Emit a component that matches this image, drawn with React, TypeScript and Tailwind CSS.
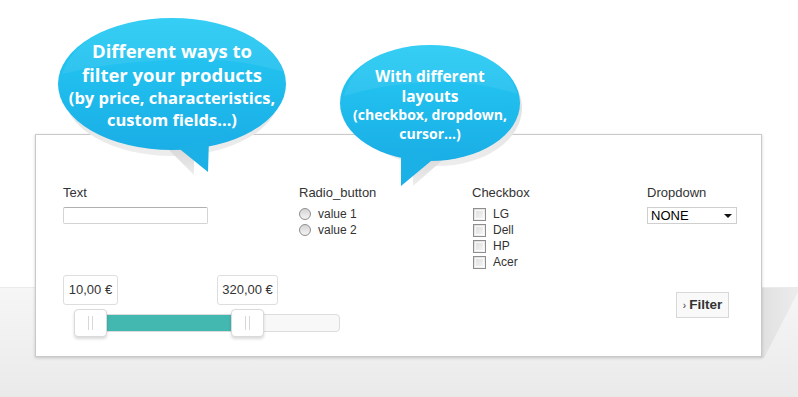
import React from "react";

const priceMin = 10;
const priceMax = 320;

function Bubbles() {
  return (
    <svg className="absolute left-0 top-0" width="798" height="200" viewBox="0 0 798 200">
      <defs>
        <linearGradient id="blue" x1="0" y1="0" x2="0" y2="1">
          <stop offset="0" stopColor="#26cbf4" />
          <stop offset="1" stopColor="#1aaee6" />
        </linearGradient>
        <linearGradient id="shade" x1="0" y1="0" x2="0" y2="1">
          <stop offset="0" stopColor="#d6d6d6" />
          <stop offset="1" stopColor="#ededed" />
        </linearGradient>
      </defs>
      {/* bubble 1 shadow */}
      <g fill="url(#shade)">
        <ellipse cx="172" cy="94" rx="108" ry="62" />
        <polygon points="165,146 194,146 194,175" />
      </g>
      <ellipse cx="172" cy="84" rx="114" ry="66" fill="url(#blue)" />
      <polygon points="176,146 209,138 208,172" fill="#1bb0e6" />
      <path d="M62 74 Q80 22 172 18 Q262 20 284 72 Q230 56 172 60 Q110 62 62 74Z" fill="#ffffff" opacity="0.07" />

      {/* bubble 2 shadow */}
      <g fill="url(#shade)">
        <ellipse cx="438" cy="108" rx="84" ry="58" />
        <polygon points="413,150 445,158 413,186" />
      </g>
      <ellipse cx="430" cy="103" rx="90" ry="58" fill="url(#blue)" />
      <polygon points="401,148 437,156 401,186" fill="#1bb0e6" />
      <path d="M344 96 Q356 48 430 45 Q504 48 517 94 Q474 80 430 82 Q384 84 344 96Z" fill="#ffffff" opacity="0.07" />
    </svg>
  );
}

function Radio({ label }: { label: string }) {
  return (
    <div className="flex items-center h-4">
      <span className="w-3 h-3 rounded-full border border-[#8e8e8e] bg-gradient-to-b from-[#d4d4d4] to-[#f4f4f4]" />
      <span className="ml-[7px]">{label}</span>
    </div>
  );
}

function Check({ label }: { label: string }) {
  return (
    <div className="flex items-center h-4">
      <span className="w-[13px] h-[13px] border border-[#8e8e8e] bg-gradient-to-br from-[#dcdcdc] to-[#f8f8f8] p-[1px]">
        <span className="block w-full h-full border border-white/70" />
      </span>
      <span className="ml-[7px]">{label}</span>
    </div>
  );
}

function PriceSlider() {
  const left = 0;
  const right = 157;
  return (
    <div className="relative w-[280px] h-[64px]">
      <div className="absolute left-0 top-0 h-[30px] w-[55px] border border-[#dedede] rounded-[3px] flex items-center justify-center text-[13px] text-[#333]">
        {priceMin.toFixed(2).replace(".", ",")} €
      </div>
      <div
        className="absolute top-0 h-[30px] w-[61px] border border-[#dedede] rounded-[3px] flex items-center justify-center text-[13px] text-[#333]"
        style={{ left: 154 }}
      >
        {priceMax.toFixed(2).replace(".", ",")} €
      </div>
      <div className="absolute left-[12px] top-[39px] w-[265px] h-[18px] rounded-[4px] border border-[#dcdcdc] bg-[#f8f8f8]" />
      <div className="absolute top-[40px] h-[16px] bg-[#42b8b0]" style={{ left: 12 + left + 20, width: right - left }} />
      {[left, right].map((x) => (
        <div
          key={x}
          className="absolute top-[34px] w-[33px] h-[28px] rounded-[4px] border border-[#dadada] bg-white shadow-[0_2px_3px_rgba(0,0,0,0.15)] flex items-center justify-center gap-[3px]"
          style={{ left: 11 + x }}
        >
          <span className="w-px h-[14px] bg-[#d8d8d8]" />
          <span className="w-px h-[14px] bg-[#d8d8d8]" />
        </div>
      ))}
    </div>
  );
}

export default function App() {
  return (
    <div className="relative w-[798px] h-[397px] overflow-hidden bg-white font-['Liberation_Sans',Arial,sans-serif] text-[#333]">
      {/* floor band */}
      <div className="absolute left-0 right-0 top-[287px] bottom-0 border-t border-[#ebebeb] bg-gradient-to-b from-[#f6f6f6] to-[#eaeaea]" />
      <svg className="absolute left-[760px] top-[288px]" width="38" height="72" viewBox="0 0 38 72">
        <defs>
          <linearGradient id="leg" x1="0" y1="0" x2="1" y2="0">
            <stop offset="0" stopColor="#e0e0e0" />
            <stop offset="1" stopColor="#ececec" />
          </linearGradient>
        </defs>
        <polygon points="0,0 38,0 38,4 4,70 0,70" fill="url(#leg)" />
      </svg>

      <div className="relative ml-[35px] mt-[134px] w-[727px] h-[223px] bg-white border border-[#c9c9c9] shadow-[0_1px_3px_rgba(0,0,0,0.18)] pl-[27px] pt-[50px]">
        <div className="flex text-[12px]">
          <div className="w-[236px]">
            <div className="text-[13px] leading-[15px]">Text</div>
            <div className="mt-[7px] w-[145px] h-[17px] rounded-[2px] border border-[#d4d4d4] border-t-[#b0b0b0]" />
          </div>
          <div className="w-[173px]">
            <div className="text-[13px] leading-[15px]">Radio_button</div>
            <div className="mt-[6px]">
              <Radio label="value 1" />
              <Radio label="value 2" />
            </div>
          </div>
          <div className="w-[175px]">
            <div className="text-[13px] leading-[15px]">Checkbox</div>
            <div className="mt-[6px] pl-px">
              <Check label="LG" />
              <Check label="Dell" />
              <Check label="HP" />
              <Check label="Acer" />
            </div>
          </div>
          <div>
            <div className="text-[13px] leading-[15px]">Dropdown</div>
            <div className="mt-[7px] w-[90px] h-[17px] border border-[#cfcfcf] flex items-center justify-between pl-[3px] pr-[4px] text-[13px] text-black">
              <span>NONE</span>
              <svg width="8" height="4" viewBox="0 0 8 4">
                <polygon points="0,0 8,0 4,4" fill="#111" />
              </svg>
            </div>
          </div>
        </div>

        <div className="flex justify-between items-start mt-[5px] pr-[32px]">
          <PriceSlider />
          <button className="mt-[17px] w-[53px] h-[26px] border border-[#d8d8d8] bg-[#f9f9f9] text-[13.5px] font-bold text-[#333] flex items-center justify-center gap-[3px]">
            <span className="text-[10px] font-normal">›</span>
            <span>Filter</span>
          </button>
        </div>
      </div>

      <Bubbles />

      <div className="absolute left-[52px] top-[39px] w-[240px] text-center text-white font-bold font-['Open_Sans',sans-serif]">
        <div className="text-[18.5px] leading-[24px]">Different ways to</div>
        <div className="text-[18.5px] leading-[24px]">filter your products</div>
        <div className="text-[16.5px] leading-[22px]">(by price, characteristics,</div>
        <div className="text-[16.5px] leading-[22px]">custom fields...)</div>
      </div>
      <div className="absolute left-[330px] top-[66px] w-[200px] text-center text-white font-bold font-['Open_Sans',sans-serif]">
        <div className="text-[15.5px] leading-[20px]">With different</div>
        <div className="text-[15.5px] leading-[20px]">layouts</div>
        <div className="text-[14px] leading-[18px]">(checkbox, dropdown,</div>
        <div className="text-[14px] leading-[19px]">cursor...)</div>
      </div>
    </div>
  );
}
